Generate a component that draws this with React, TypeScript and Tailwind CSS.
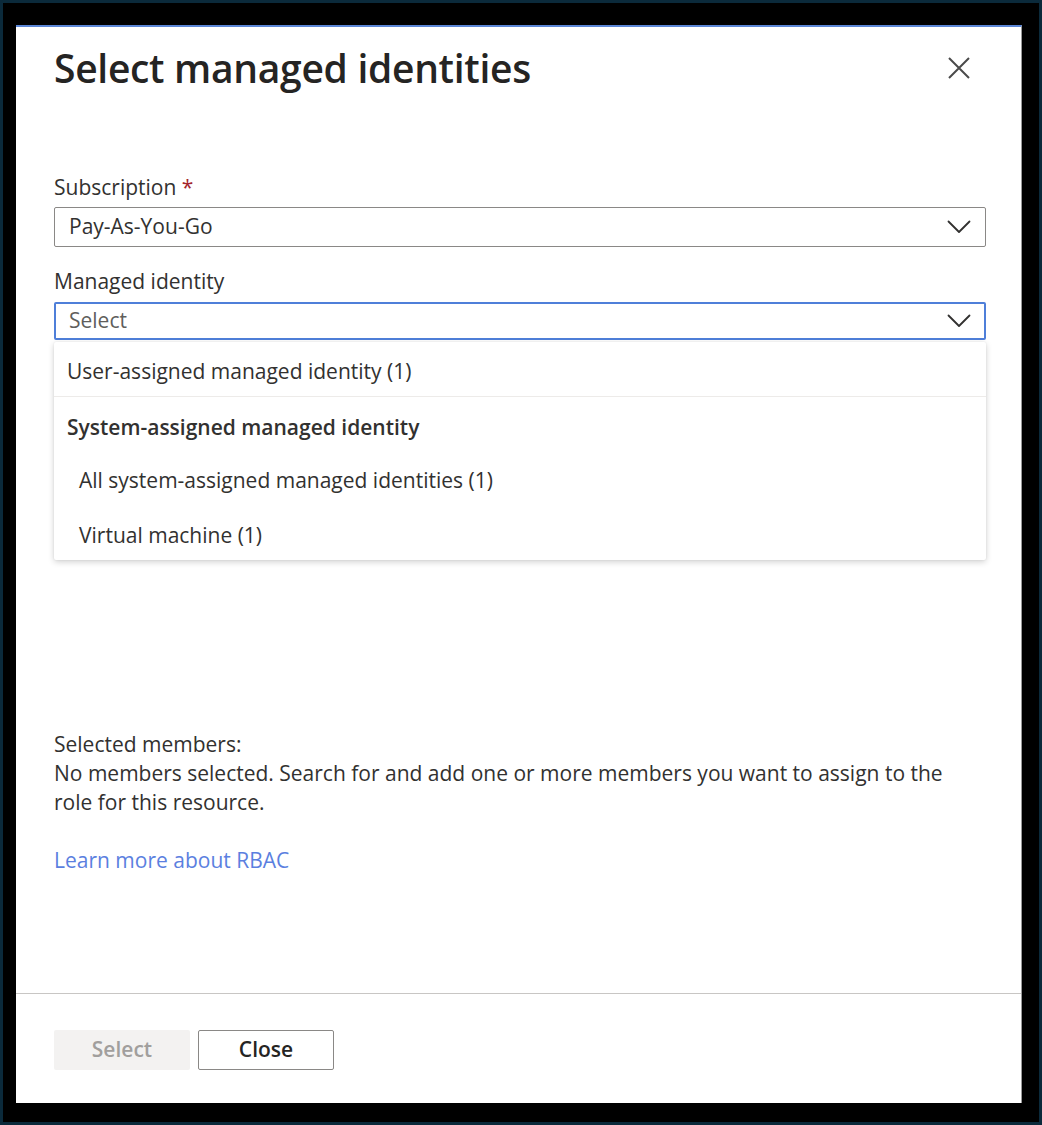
import React from "react";

const font = { fontFamily: '"Open Sans", "Noto Sans", sans-serif' };

function Chevron() {
  return (
    <svg width="24" height="14" viewBox="0 0 24 14" fill="none">
      <path d="M1.5 1.5 L12 12 L22.5 1.5" stroke="#323130" strokeWidth="1.8" strokeLinecap="round" strokeLinejoin="round" />
    </svg>
  );
}

export default function App() {
  return (
    <div className="w-[1042px] h-[1125px] bg-[#0b2a3b] p-[3px]" style={font}>
      <div className="w-full h-full bg-black pt-[22px] pl-[13px] pr-[17px] pb-[19px]">
        <div className="w-full h-full bg-white border-t-2 border-[#5b86d6] border-r border-r-[#9a9a9a] flex flex-col text-[#323130]">
          <div className="flex-1 pl-[38px] pr-[35px] flex flex-col">
            <div className="flex items-start justify-between pt-[17px]">
              <h1 className="text-[39px] font-semibold leading-[48px] text-[#252423] tracking-[-0.3px]">Select managed identities</h1>
              <button className="mt-[13px] mr-[16px]">
                <svg width="22" height="22" viewBox="0 0 22 22">
                  <path d="M1 1 L21 21 M21 1 L1 21" stroke="#4a4a4a" strokeWidth="2" />
                </svg>
              </button>
            </div>

            <div className="mt-[81px] text-[21px] leading-[28px]">
              Subscription <span className="text-[#a4262c]">*</span>
            </div>
            <div className="mt-[6px] h-[40px] border-[1.5px] border-[#8a8886] rounded-[2px] flex items-center justify-between pl-[14px] pr-[14px] text-[21px]">
              <span>Pay-As-You-Go</span>
              <Chevron />
            </div>

            <div className="mt-[20px] text-[21px] leading-[28px]">Managed identity</div>
            <div className="relative mt-[7px]">
              <div className="h-[38px] border-2 border-[#4f7fd9] rounded-[2px] flex items-center justify-between pl-[13px] pr-[13px] text-[21px]">
                <span className="text-[#605e5c]">Select</span>
                <Chevron />
              </div>
              <div className="absolute left-0 right-0 top-[40px] bg-white shadow-[0_2px_6px_rgba(0,0,0,0.18),0_0_2px_rgba(0,0,0,0.08)] rounded-[2px] text-[21px]">
                <div className="h-[55px] flex items-center pl-[13px] pt-[5px] border-b border-[#edebe9]">
                  User-assigned managed identity (1)
                </div>
                <div className="h-[58px] flex items-center pl-[13px] pt-[3px] font-semibold">
                  System-assigned managed identity
                </div>
                <div className="h-[51px] flex items-center pl-[25px]">
                  All system-assigned managed identities (1)
                </div>
                <div className="h-[54px] flex items-center pl-[25px] pt-[6px]">
                  Virtual machine (1)
                </div>
              </div>
            </div>

            <div className="mt-[390px] text-[21px] leading-[29px]">
              <div>Selected members:</div>
              <div>No members selected. Search for and add one or more members you want to assign to the role for this resource.</div>
              <div className="mt-[29px] text-[#5b7fe0]">Learn more about RBAC</div>
            </div>
          </div>

          <div className="border-t border-[#c8c6c4] h-[110px] pl-[38px] pt-[36px] flex gap-[8px]">
            <button className="w-[136px] h-[40px] bg-[#f3f2f1] text-[#a19f9d] font-semibold text-[21px] rounded-[2px]">Select</button>
            <button className="w-[136px] h-[40px] bg-white border-[1.5px] border-[#8a8886] text-[#252423] font-semibold text-[21px] rounded-[2px]">Close</button>
          </div>
        </div>
      </div>
    </div>
  );
}
